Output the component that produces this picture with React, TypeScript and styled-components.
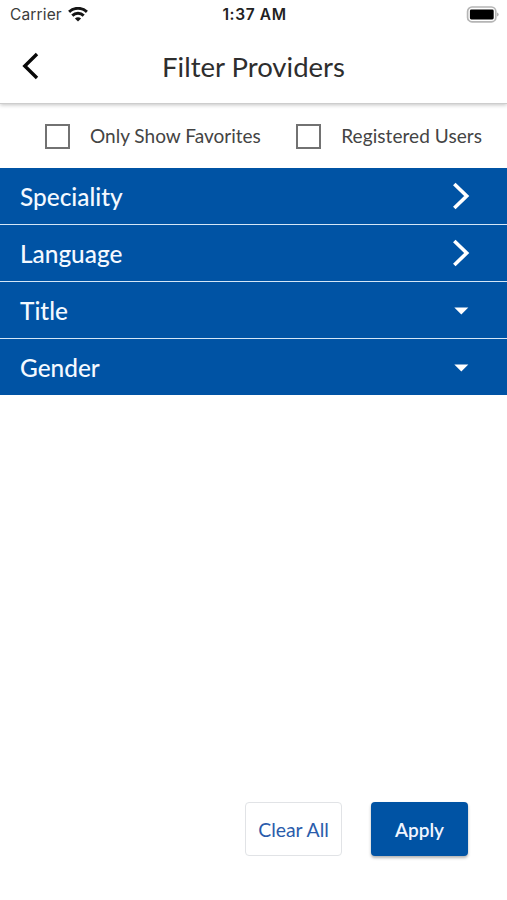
import React from "react";
import styled, { createGlobalStyle } from "styled-components";

const GlobalStyle = createGlobalStyle`
  * { box-sizing: border-box; }
  html, body { margin: 0; background: #fff; }
  body { font-family: Lato, "Liberation Sans", sans-serif; overflow: hidden; }
  button { font-family: inherit; margin: 0; padding: 0; border: 0; }
`;

const Screen = styled.div`
  display: flex;
  flex-direction: column;
  width: 100%;
  height: 900px;
  background: #fff;
`;

const Header = styled.header`
  height: 104px;
  border-bottom: 1px solid #cdcdcd;
  box-shadow: 0 1px 4px rgba(0, 0, 0, 0.24);
`;

const StatusBar = styled.div`
  display: grid;
  grid-template-columns: 1fr auto 1fr;
  align-items: center;
  height: 30px;
  padding: 0 8px 0 10px;
  font-family: Inter, sans-serif;
  font-size: 15.5px;
  line-height: 30px;
  color: #3c3c3c;
`;

const Carrier = styled.div`
  display: flex;
  align-items: center;
  gap: 6px;
  letter-spacing: 0.15px;
`;

const Clock = styled.div`
  font-weight: 600;
  letter-spacing: 0.62px;
  color: #222;
`;

const BatterySlot = styled.div`
  display: flex;
  justify-content: flex-end;
  height: 19px;
`;

const NavBar = styled.div`
  display: grid;
  grid-template-columns: 60px 1fr 60px;
  align-items: center;
  height: 73px;
`;

const BackButton = styled.button`
  display: flex;
  align-items: center;
  height: 42px;
  padding: 0 0 2px 20px;
  background: none;
`;

const Title = styled.h1`
  margin: 0;
  font-size: 27.5px;
  font-weight: 400;
  line-height: 40px;
  text-align: center;
  color: #2e2e2e;
`;

const Toggles = styled.div`
  display: flex;
  align-items: center;
  justify-content: space-between;
  height: 64px;
  padding: 0 25px 0 45px;
`;

const Toggle = styled.label`
  display: flex;
  align-items: center;
  gap: 20px;
  font-size: 19.05px;
  line-height: 26px;
  white-space: nowrap;
  color: #444;

  &:last-child { letter-spacing: 0.05px; }
`;

const Box = styled.span`
  width: 25px;
  height: 25px;
  border: 2px solid #727272;
`;

const Rows = styled.div`
  display: flex;
  flex-direction: column;
  gap: 1px;
  background: #d4e6f7;
`;

const Row = styled.div`
  display: flex;
  align-items: center;
  justify-content: space-between;
  height: 56px;
  padding: 0 33px 0 20px;
  background: #0053a4;
  color: #f4f9ff;
  font-size: 24.4px;
  font-weight: 500;
  line-height: 56px;
`;

const Label = styled.span`
  padding-top: 2px;
  line-height: 54px;
`;

const Indicator = styled.span`
  display: flex;
  justify-content: center;
  width: 26px;
`;

const Actions = styled.footer`
  display: flex;
  justify-content: flex-end;
  gap: 29px;
  margin-top: auto;
  padding: 0 39px 44px 0;
`;

const ActionButton = styled.button<{ $primary?: boolean }>`
  width: 97px;
  height: 54px;
  border-radius: 4px;
  border: ${(p) => (p.$primary ? "0" : "1px solid #e1e3e6")};
  background: ${(p) => (p.$primary ? "#0053a4" : "#fff")};
  color: ${(p) => (p.$primary ? "#f1f6ff" : "#2a5cab")};
  font-size: ${(p) => (p.$primary ? 19 : 19.4)}px;
  font-weight: ${(p) => (p.$primary ? 600 : 400)};
  box-shadow: ${(p) => (p.$primary ? "0 2px 3px rgba(0, 0, 0, 0.3)" : "none")};
`;

const WifiIcon = () => (
  <svg width="20" height="17" viewBox="0 0 20 17" fill="none" stroke="#151515" strokeWidth="2.9">
    <path d="M1.1 4.9C6 .1 14 .1 18.9 4.9" />
    <path d="M4.3 8.6c3.2-3.1 8.2-3.1 11.4 0" />
    <path d="M6.9 11.4c1.8-1.5 4.4-1.5 6.2 0L10 14.5z" fill="#151515" stroke="none" />
  </svg>
);

const BatteryIcon = () => (
  <svg width="33" height="18" viewBox="0 0 33 18">
    <rect x="1.6" y="1" width="28.2" height="14.8" rx="4.4" fill="#fff" stroke="#b5b5b5" strokeWidth="1.7" />
    <rect x="3.9" y="3.5" width="23.8" height="9.9" rx="1.4" fill="#000" />
    <path d="M31.1 6.4q1.5.6 1.5 2t-1.5 2z" fill="#aaa" />
  </svg>
);

const BackIcon = () => (
  <svg width="20" height="28" viewBox="0 0 20 28" fill="none" stroke="#080808" strokeWidth="3.4">
    <path d="M17 2 4.8 14 17 26" />
  </svg>
);

const ChevronIcon = () => (
  <svg width="20" height="28" viewBox="0 0 20 28" fill="none" stroke="#fff" strokeWidth="3.6">
    <path d="M3.3 2 15.7 14 3.3 26" />
  </svg>
);

const CaretIcon = () => (
  <svg width="16" height="10" viewBox="0 0 16 10">
    <path d="M1.3 2.5h14L8.3 9.6z" fill="#fff" />
  </svg>
);

const filters = [
  { name: "Speciality", opensPage: true },
  { name: "Language", opensPage: true },
  { name: "Title", opensPage: false },
  { name: "Gender", opensPage: false },
];

export default function App() {
  return (
    <>
      <GlobalStyle />
      <Screen>
        <Header>
          <StatusBar>
            <Carrier>Carrier <WifiIcon /></Carrier>
            <Clock>1:37 AM</Clock>
            <BatterySlot><BatteryIcon /></BatterySlot>
          </StatusBar>
          <NavBar>
            <BackButton aria-label="Back"><BackIcon /></BackButton>
            <Title>Filter Providers</Title>
          </NavBar>
        </Header>
        <Toggles>
          <Toggle><Box />Only Show Favorites</Toggle>
          <Toggle><Box />Registered Users</Toggle>
        </Toggles>
        <Rows>
          {filters.map((f) => (
            <Row key={f.name}>
              <Label>{f.name}</Label>
              <Indicator>{f.opensPage ? <ChevronIcon /> : <CaretIcon />}</Indicator>
            </Row>
          ))}
        </Rows>
        <Actions>
          <ActionButton>Clear All</ActionButton>
          <ActionButton $primary>Apply</ActionButton>
        </Actions>
      </Screen>
    </>
  );
}
